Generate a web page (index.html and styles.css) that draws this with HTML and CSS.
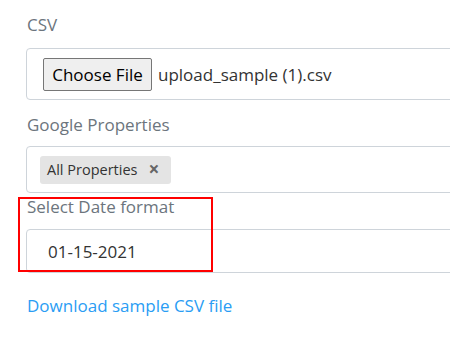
FILE: index.html
```html
<!DOCTYPE html>
<html>
<head>
<meta charset="utf-8">
<link rel="stylesheet" href="styles.css">
</head>
<body>
<div class="form">
  <div class="field field-csv">
    <div class="label">CSV</div>
    <div class="control control-file">
      <span class="file-btn">Choose File</span>
      <span class="file-name">upload_sample (1).csv</span>
    </div>
  </div>
  <div class="field field-props">
    <div class="label">Google Properties</div>
    <div class="control control-tags">
      <span class="chip">All Properties <span class="chip-x">×</span></span>
    </div>
  </div>
  <div class="field field-date">
    <div class="label">Select Date format</div>
    <div class="control control-select">01-15-2021</div>
    <div class="highlight"></div>
  </div>
  <a class="link" href="#">Download sample CSV file</a>
</div>
</body>
</html>
```
FILE: styles.css
```css
html, body {
  margin: 0;
  padding: 0;
  background: #fff;
  overflow: hidden;
  width: 450px;
  height: 352px;
}
body {
  font-family: "Open Sans", "Noto Sans", sans-serif;
  font-size: 17px;
  color: #495057;
}
.form {
  padding: 13px 0 0 26px;
  width: 424px;
  overflow: hidden;
}
.field {
  margin-right: -20px;
}
.label {
  color: #6c757d;
  line-height: 24px;
  height: 24px;
  padding-left: 1px;
}
.control {
  box-sizing: border-box;
  border: 1px solid #ced4da;
  border-radius: 4px;
  display: flex;
  align-items: center;
}
.field-csv .label { margin-bottom: 11px; }
.control-file {
  height: 52px;
  padding-left: 16px;
}
.file-btn {
  box-sizing: border-box;
  height: 33px;
  width: 109px;
  border: 1px solid #767676;
  border-radius: 2px;
  background: #efefef;
  color: #000;
  display: flex;
  align-items: center;
  justify-content: center;
  font-size: 17px;
}
.file-name {
  margin-left: 6px;
  color: #333;
}
.field-props { margin-top: 13px; }
.field-props .label { margin-bottom: 9px; }
.control-tags {
  height: 47px;
  padding-left: 13px;
}
.chip {
  box-sizing: border-box;
  height: 28px;
  width: 131px;
  background: #e4e4e4;
  border-radius: 3px;
  font-size: 14.5px;
  color: #333;
  display: flex;
  align-items: center;
  padding-left: 7px;
}
.chip-x {
  margin-left: 11px;
  font-weight: bold;
  color: #666;
  font-size: 19px;
  line-height: 1;
}
.field-date {
  margin-top: 2px;
  position: relative;
}
.field-date .label { margin-bottom: 10px; }
.control-select {
  height: 44px;
  padding-left: 21px;
  color: #333;
}
.highlight {
  position: absolute;
  left: -8px;
  top: 2px;
  width: 195px;
  height: 75px;
  box-sizing: border-box;
  border: 2px solid #ff0000;
}
.link {
  display: block;
  margin-top: 21px;
  line-height: 24px;
  color: #2a9df4;
  text-decoration: none;
  padding-left: 1px;
}
```
